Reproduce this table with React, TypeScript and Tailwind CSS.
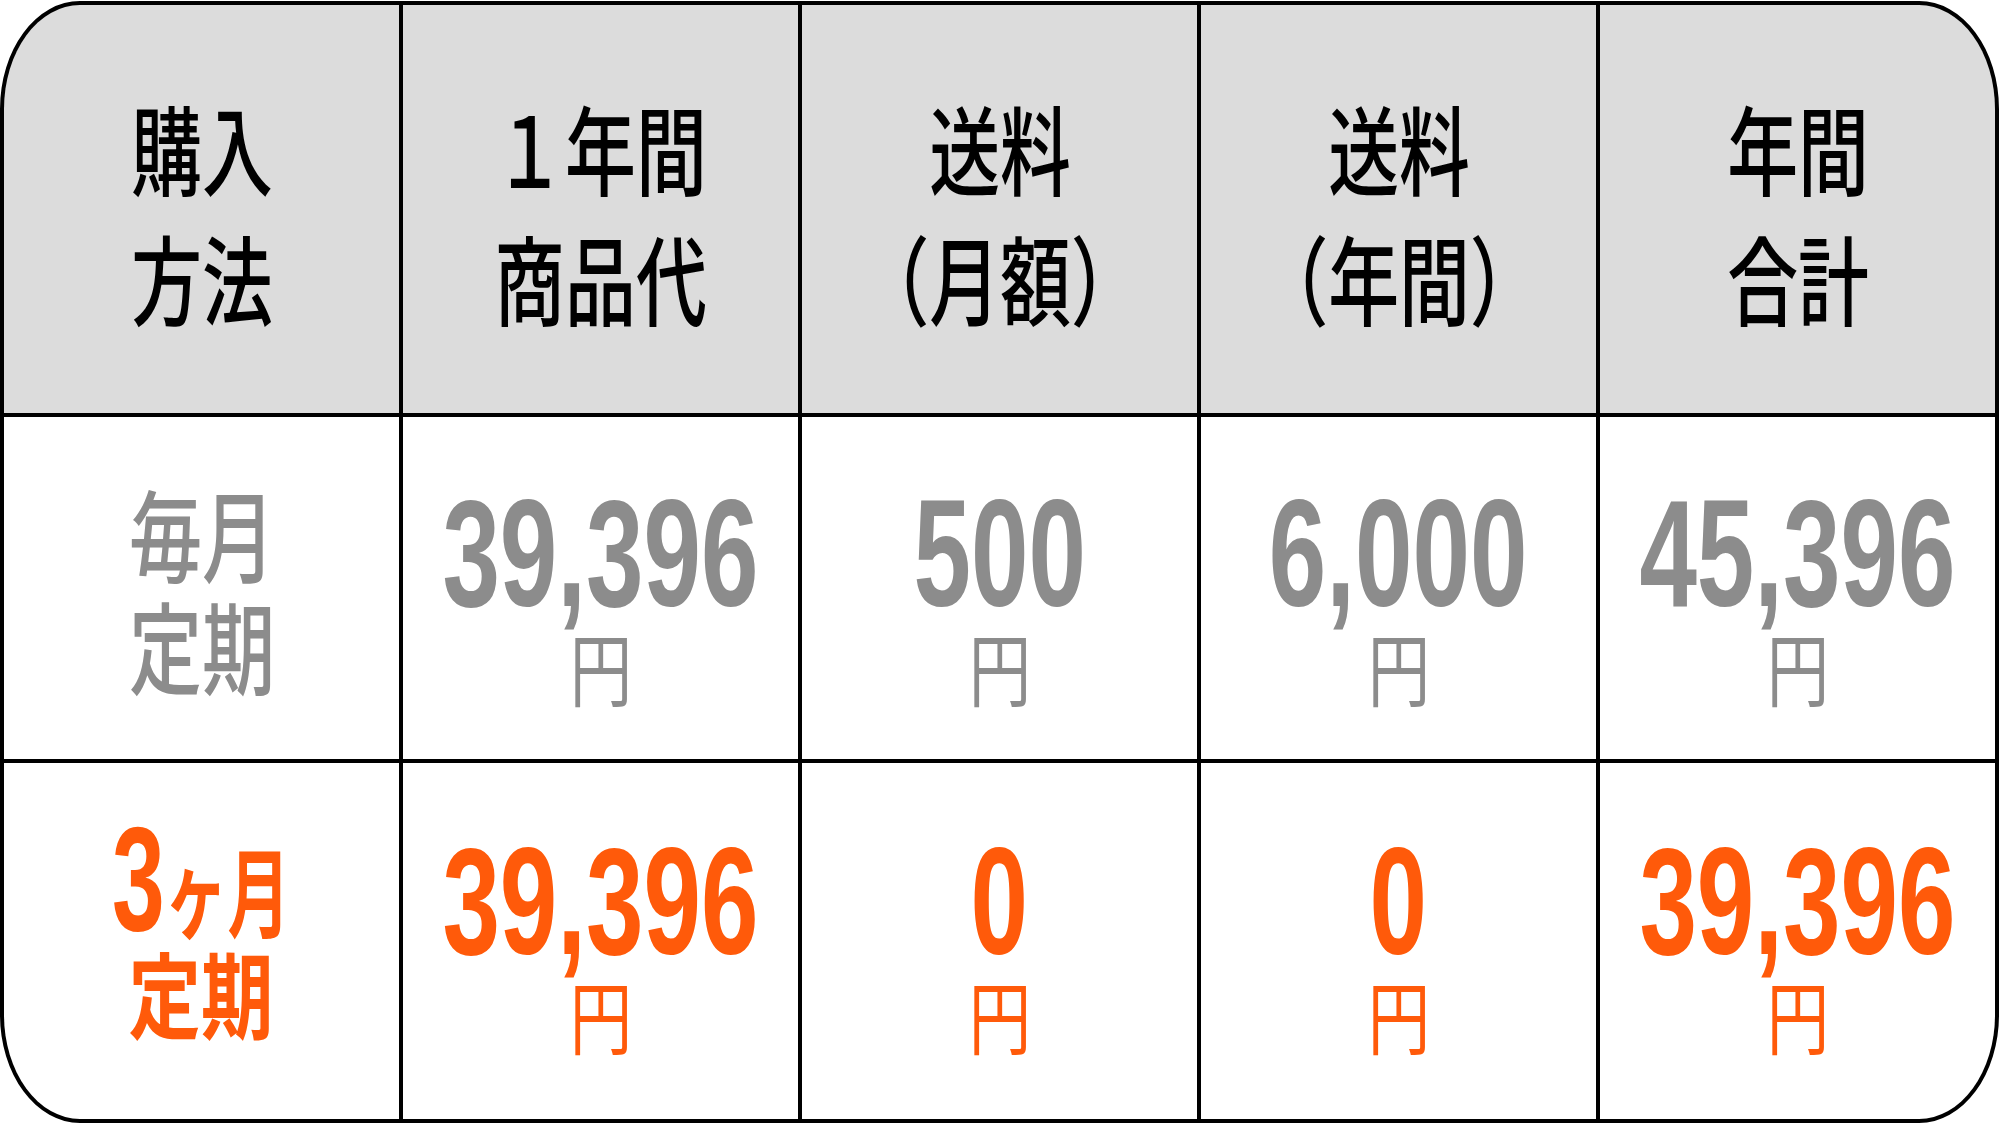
import React from "react";

const cjk = "font-['Noto_Sans_CJK_JP',sans-serif]";
const num = "font-['Liberation_Sans',sans-serif]";

const headers = [
  ["購入", "方法"],
  ["１年間", "商品代"],
  ["送料", "（月額）"],
  ["送料", "（年間）"],
  ["年間", "合計"],
];

const monthly = ["39,396", "500", "6,000", "45,396"];
const quarterly = ["39,396", "0", "0", "39,396"];

function HeaderCell({ lines }: { lines: string[] }) {
  return (
    <div className="flex items-center justify-center bg-[#dcdcdc] pt-[4px]">
      <div
        className={`${cjk} scale-x-[0.73] text-center text-[97px] font-medium leading-[130px] text-black`}
      >
        {lines.map((line) => (
          <div key={line}>{line}</div>
        ))}
      </div>
    </div>
  );
}

function PriceCell({ value, tone }: { value: string; tone: "gray" | "orange" }) {
  const color = tone === "gray" ? "text-[#8c8c8c]" : "text-[#ff5a0a]";
  return (
    <div
      className={`flex flex-col items-center justify-center bg-white ${color} ${
        tone === "gray" ? "pt-[6px]" : "pb-[4px]"
      }`}
    >
      <span className={`${num} scale-x-[0.68] text-[152px] font-bold leading-none`}>
        {value}
      </span>
      <span className={`${cjk} mt-[-4px] scale-x-[0.78] text-[80px] leading-none`}>円</span>
    </div>
  );
}

export default function App() {
  return (
    <div className="h-[1125px] w-[2000px] bg-white pt-[1px]">
      <div className="grid h-[1122px] w-[1999px] grid-cols-5 grid-rows-[408px_342px_1fr] gap-[4px] overflow-hidden rounded-[80px_/_108px] border-[4px] border-black bg-black">
        {headers.map((lines, i) => (
          <HeaderCell key={i} lines={lines} />
        ))}

        <div className="flex items-center justify-center bg-white">
          <div
            className={`${cjk} scale-x-[0.73] text-center text-[100px] font-medium leading-[112px] text-[#8c8c8c]`}
          >
            <div>毎月</div>
            <div>定期</div>
          </div>
        </div>
        {monthly.map((v, i) => (
          <PriceCell key={i} value={v} tone="gray" />
        ))}

        <div className="flex flex-col items-center justify-center bg-white pb-[40px] font-bold text-[#ff5a0a]">
          <div className="scale-x-[0.64] whitespace-nowrap leading-none">
            <span className={`${num} text-[148px] leading-none`}>3</span>
            <span className={`${cjk} text-[98px] leading-none`}>ヶ月</span>
          </div>
          <div className={`${cjk} mt-[-9px] scale-x-[0.77] text-[94px] leading-none`}>定期</div>
        </div>
        {quarterly.map((v, i) => (
          <PriceCell key={i} value={v} tone="orange" />
        ))}
      </div>
    </div>
  );
}
